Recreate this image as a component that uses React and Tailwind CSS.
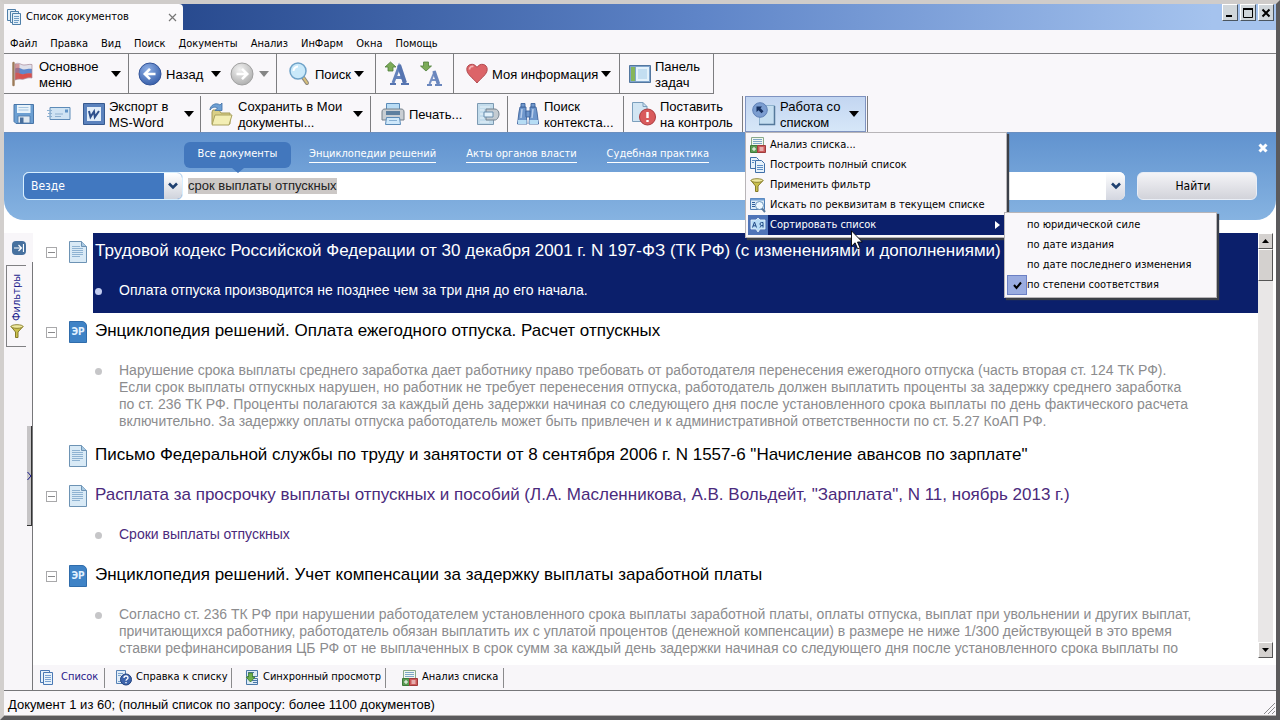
import { useState } from "react";

const ui = "font-['DejaVu_Sans_Condensed','DejaVu_Sans',sans-serif]";

const menuItems = ["Файл", "Правка", "Вид", "Поиск", "Документы", "Анализ", "ИнФарм", "Окна", "Помощь"];

const searchTabs = ["Энциклопедии решений", "Акты органов власти", "Судебная практика"];

const documents = [
  {
    title: "Трудовой кодекс Российской Федерации от 30 декабря 2001 г. N 197-ФЗ (ТК РФ) (с изменениями и дополнениями)",
    icon: "doc",
    active: true,
    lines: ["Оплата отпуска производится не позднее чем за три дня до его начала."],
  },
  {
    title: "Энциклопедия решений. Оплата ежегодного отпуска. Расчет отпускных",
    icon: "er",
    lines: [
      "Нарушение срока выплаты среднего заработка дает работнику право требовать от работодателя перенесения ежегодного отпуска (часть вторая ст. 124 ТК РФ).",
      "Если срок выплаты отпускных нарушен, но работник не требует перенесения отпуска, работодатель должен выплатить проценты за задержку среднего заработка",
      "по ст. 236 ТК РФ. Проценты полагаются за каждый день задержки начиная со следующего дня после установленного срока выплаты по день фактического расчета",
      "включительно. За задержку оплаты отпуска работодатель может быть привлечен и к административной ответственности по ст. 5.27 КоАП РФ.",
    ],
  },
  {
    title: "Письмо Федеральной службы по труду и занятости от 8 сентября 2006 г. N 1557-6 \"Начисление авансов по зарплате\"",
    icon: "doc",
    lines: [],
  },
  {
    title: "Расплата за просрочку выплаты отпускных и пособий (Л.А. Масленникова, А.В. Вольдейт, \"Зарплата\", N 11, ноябрь 2013 г.)",
    icon: "doc",
    visited: true,
    lines: ["Сроки выплаты отпускных"],
  },
  {
    title: "Энциклопедия решений. Учет компенсации за задержку выплаты заработной платы",
    icon: "er",
    lines: [
      "Согласно ст. 236 ТК РФ при нарушении работодателем установленного срока выплаты заработной платы, оплаты отпуска, выплат при увольнении и других выплат,",
      "причитающихся работнику, работодатель обязан выплатить их с уплатой процентов (денежной компенсации) в размере не ниже 1/300 действующей в это время",
      "ставки рефинансирования ЦБ РФ от не выплаченных в срок сумм за каждый день задержки начиная со следующего дня после установленного срока выплаты по",
    ],
  },
];

const sortOptions = ["по юридической силе", "по дате издания", "по дате последнего изменения", "по степени соответствия"];

/* ---------- icons ---------- */

function Arrow({ className = "text-black" }) {
  return (
    <svg width="10" height="6" viewBox="0 0 10 6" className={`shrink-0 ${className}`}>
      <path d="M0 0h10L5 6z" fill="currentColor" />
    </svg>
  );
}

function Chevron() {
  return (
    <svg width="10" height="8" viewBox="0 0 10 8" className="shrink-0">
      <path d="M1 1.5l4 4 4-4" fill="none" stroke="#1f4170" strokeWidth="2.6" />
    </svg>
  );
}

function PagesIcon() {
  return (
    <svg width="15" height="16" viewBox="0 0 15 16" className="shrink-0">
      <g fill="#e4f0f8" stroke="#4f7fa8">
        <path d="M.5.5h8v11h-8z" />
        <path d="M3.5 2.5h8v11h-8z" />
        <path d="M5.5 4.5h8v11h-8z" />
      </g>
      <path d="M7 7.5h5M7 9.5h5M7 11.5h5M7 13.5h4" stroke="#6f9cc4" />
    </svg>
  );
}

function ListIcon() {
  return (
    <svg width="14" height="16" viewBox="0 0 14 16" className="shrink-0">
      <g fill="#e8f2fb" stroke="#4a78b4">
        <path d="M.5.5h9v12h-9z" />
        <path d="M3.5 2.5h9v12h-9z" />
      </g>
      <path d="M5 5.5h6M5 7.5h6M5 9.5h6M5 11.5h6" stroke="#7aa2d2" />
    </svg>
  );
}

function FlagIcon() {
  return (
    <svg width="24" height="26" viewBox="0 0 24 26" className="shrink-0">
      <path d="M2.5 2v22" stroke="#9c7a58" strokeWidth="2.4" strokeLinecap="round" />
      <path d="M4 3c4-2 6 1 9 1s5-1 8-.5V17c-3-.5-5 0-8 1-3 1-5-2.5-9-1z" fill="#dfe0ea" />
      <path d="M4 7.5c4-2 6 1 9 1s5-1 8-.5v5c-3-.5-5-.5-8 .5-3 1-5-2-9-1z" fill="#5f88cc" />
      <path d="M4 12c4-1 6 2 9 1s5-1 8-.5V17c-3-.5-5 0-8 1-3 1-5-1-9 1z" fill="#d8504e" />
      <path d="M4 3h4.500v15L4 19z" fill="#c9605f" opacity=".6" />
      <path d="M4 3c4-2 6 1 9 1s5-1 8-.5V17c-3-.5-5 0-8 1-3 1-5-1-9 1z" fill="none" stroke="#a9899a" strokeWidth=".7" />
    </svg>
  );
}

function RoundArrow({ back }) {
  return (
    <svg width="24" height="24" viewBox="0 0 24 24" className="shrink-0">
      <defs>
        <radialGradient id={back ? "gBack" : "gFwd"} cx=".4" cy=".3" r=".8">
          <stop offset="0" stopColor={back ? "#8fb0e6" : "#f2f2f2"} />
          <stop offset="1" stopColor={back ? "#2f57a4" : "#a8a8a8"} />
        </radialGradient>
      </defs>
      <circle cx="12" cy="12" r="11" fill={back ? "url(#gBack)" : "url(#gFwd)"} stroke={back ? "#34559a" : "#a0a0a0"} />
      <path
        d={back ? "M17.5 12H7.5M12 6.8L6.8 12l5.2 5.2" : "M6.5 12h10M12 6.8l5.2 5.2-5.2 5.2"}
        fill="none"
        stroke="#fff"
        strokeWidth="2.6"
      />
    </svg>
  );
}

function MagnifierIcon() {
  return (
    <svg width="22" height="24" viewBox="0 0 22 24" className="shrink-0">
      <path d="M13 14l5 7" stroke="#8f8a80" strokeWidth="4" strokeLinecap="round" />
      <path d="M14 15l4 6" stroke="#d9c07a" strokeWidth="2" strokeLinecap="round" />
      <circle cx="9" cy="9" r="8" fill="#c9e9fa" stroke="#6ea2c8" strokeWidth="1.5" />
      <path d="M4.5 9A4.5 4.5 0 019 4.5" stroke="#fff" strokeWidth="2" fill="none" />
    </svg>
  );
}

function FontIcon({ up }) {
  return (
    <svg width="24" height="26" viewBox="0 0 24 26" className="shrink-0">
      {up ? (
        <>
          <path d="M8 22l6-16 5.500 16M10.500 16.500h8" fill="none" stroke="#6482bc" strokeWidth="3" />
          <path d="M14 4l6 18" stroke="#5674b0" strokeWidth="4" />
          <path d="M5 23h6M16 23h8" stroke="#5674b0" strokeWidth="2" />
          <path d="M5.5 1L0 6h3v4h5V6h3z" fill="#7cab58" stroke="#4f7d3a" strokeWidth=".8" />
        </>
      ) : (
        <>
          <path d="M9.5 23L14 12l4 11M11 19h7" fill="none" stroke="#7791c4" strokeWidth="2" />
          <path d="M14 10l4.5 13" stroke="#6a86bd" strokeWidth="3.5" />
          <path d="M7 24h5M15 24h7" stroke="#6a86bd" strokeWidth="2" />
          <path d="M3.5 1h5v4h3L6 10 .5 5h3z" fill="#7cab58" stroke="#4f7d3a" strokeWidth=".8" />
        </>
      )}
    </svg>
  );
}

function HeartIcon() {
  return (
    <svg width="22" height="21" viewBox="0 0 22 21" className="shrink-0">
      <path d="M11 20C7 15 .8 11.5.8 6.3.8 1 8-.8 11 4.5 14-.8 21.2 1 21.2 6.300 21.200 11.500 15 15 11 20z" fill="#dc6468" stroke="#b14a50" />
      <path d="M3.5 6.5c0-2.5 2-3.5 4-3" stroke="#f3b4b4" strokeWidth="1.8" fill="none" />
    </svg>
  );
}

function PanelIcon() {
  return (
    <svg width="22" height="18" viewBox="0 0 22 18" className="shrink-0">
      <path d="M.5.5h21v17H.5z" fill="#7fa4cc" stroke="#54779f" />
      <path d="M2 2h4v14H2z" fill="#86b65a" />
      <path d="M7 2h13v14H7z" fill="#e4f2fb" />
      <path d="M9 4h9v10H9z" fill="#c3def1" />
    </svg>
  );
}

function FloppyIcon() {
  return (
    <svg width="22" height="22" viewBox="0 0 22 22" className="shrink-0">
      <path d="M1 1.5h19.500v19H3l-2-2z" fill="#6c9fd2" stroke="#4a76a8" />
      <path d="M4 2h13.5v8H4z" fill="#e9f3fa" />
      <path d="M5.5 4.5h10M5.5 7h10" stroke="#a8c6e2" />
      <path d="M5 13h12v7H5z" fill="#dfe8f0" stroke="#4a76a8" strokeWidth=".8" />
      <path d="M7 14.5h3.5V20H7z" fill="#496f9c" />
    </svg>
  );
}

function EnvelopeIcon() {
  return (
    <svg width="24" height="16" viewBox="0 0 24 16" className="shrink-0">
      <path d="M3 1.5h20v12H3z" fill="#cfe3f3" stroke="#5d8bb8" />
      <path d="M18 3.5h3v3h-3z" fill="#5f93c6" />
      <path d="M8 8h8M8 10.5h6" stroke="#8fb0cf" />
      <path d="M0 4.5h5M1 7.5h4M0 10.5h5" stroke="#8db0d0" />
    </svg>
  );
}

function WordIcon() {
  return (
    <svg width="22" height="22" viewBox="0 0 22 22" className="shrink-0">
      <path d="M.5.5h21v21H.5z" fill="#5b82bd" stroke="#36598f" />
      <path d="M4 4h14v14H4z" fill="#e2edf9" />
      <path d="M6 8l1.500 6L11 8.500l.8 5.500L16 8" fill="none" stroke="#2d4f8c" strokeWidth="2" />
    </svg>
  );
}

function FolderIcon() {
  return (
    <svg width="25" height="24" viewBox="0 0 25 24" className="shrink-0">
      <path d="M3 10l1-2h6l2 3h9v11H3z" fill="#d9cf86" stroke="#a39a58" />
      <path d="M6 13h17l-3 10H3z" fill="#f3eeb4" stroke="#aaa25e" />
      <path d="M1 8c0-5 6-8 10-5l2-2v7.5H6L8.5 6C6 4.5 3 5 1 8z" fill="#6ea0d4" stroke="#3f6ea6" strokeWidth=".8" />
    </svg>
  );
}

function PrinterIcon() {
  return (
    <svg width="24" height="24" viewBox="0 0 24 24" className="shrink-0">
      <path d="M5.5 1.5h13v7h-13z" fill="#b9dcf5" stroke="#5b8bb8" />
      <path d="M1 10c0-2 1-3 3-3h16c2 0 3 1 3 3v8H1z" fill="#c9ced3" stroke="#74808a" />
      <path d="M5 9h14v4H5z" fill="#5d7f9f" />
      <path d="M5.5 15.5h13l1 7h-15z" fill="#cfe8fa" stroke="#5b8bb8" />
      <path d="M8 18.5h8" stroke="#88b0d2" />
    </svg>
  );
}

function PrintDocIcon() {
  return (
    <svg width="24" height="24" viewBox="0 0 24 24" className="shrink-0">
      <path d="M1.5 1.5h16v21h-16z" fill="#c3dcec" stroke="#7d9ab2" />
      <path d="M4 5h10M4 8h4M4 12h3M4 16h4M4 20h9" stroke="#e8f3fa" />
      <path d="M10 7h9c2 0 4 2 4 5s-2 6-4 6h-9z" fill="#c4cbd1" stroke="#74828e" />
      <path d="M8 10h9v5H8z" fill="#e3f1fa" stroke="#6a8fae" />
    </svg>
  );
}

function BinocularsIcon() {
  return (
    <svg width="24" height="24" viewBox="0 0 24 24" className="shrink-0">
      <g fill="#6f97cc" stroke="#3c629c" strokeWidth=".9">
        <path d="M4 5h6v5l1 12H1.500L3 10z" />
        <path d="M14 5h6l1 5 1.500 12H13l1-12z" />
        <path d="M10 9h4v6h-4z" />
        <path d="M5 1.5h4V5H5zM15 1.5h4V5h-4z" />
      </g>
      <path d="M2 18h8.5v4H2zM13.5 18H22v4h-8.500z" fill="#b6dcf4" />
      <path d="M6 7L5 16M17 7l-1 9" stroke="#b7cdec" strokeWidth="1.5" />
    </svg>
  );
}

function ControlIcon() {
  return (
    <svg width="25" height="24" viewBox="0 0 25 24" className="shrink-0">
      <path d="M1.5.5H12l4 4v15H1.500z" fill="#d2e5f3" stroke="#7c9fbd" />
      <path d="M12 .5v4h4" fill="none" stroke="#7c9fbd" />
      <circle cx="16.5" cy="15" r="8" fill="#d95a5c" stroke="#ab3c40" />
      <path d="M16.5 10v6M16.5 18v2" stroke="#fff" strokeWidth="2.4" />
    </svg>
  );
}

function ListWorkIcon() {
  return (
    <svg width="24" height="24" viewBox="0 0 24 24" className="shrink-0">
      <path d="M7.5 3.5h15v19h-15z" fill="#c5def0" stroke="#8fb3cf" />
      <path d="M7 22.5h15.5V4" stroke="#55799b" strokeWidth="1.5" fill="none" />
      <circle cx="8" cy="8" r="7.3" fill="#7b9dd0" stroke="#5f80b6" />
      <path d="M4.5 4.5H10L8.5 6.2l3 3-2 2-3-3L4.500 10z" fill="#16305f" />
    </svg>
  );
}

function AnalysisIcon() {
  return (
    <svg width="16" height="16" viewBox="0 0 16 16" className="shrink-0">
      <path d="M1.5.5h12v9h-12z" fill="#f0f8ee" stroke="#8aa98a" />
      <path d="M3 2.5h9M3 4.5h9M3 6.5h9" stroke="#7fa6c8" />
      <path d="M.5 8.5h7v7h-7z" fill="#5c9c54" stroke="#3d7a3a" />
      <path d="M7.5 8.5h8v7h-8z" fill="#cc5a5a" stroke="#a03c3c" />
      <path d="M2 12h4M4 10v4M9.5 11h4M9.5 13h4" stroke="#fff" />
    </svg>
  );
}

function CopyIcon() {
  return (
    <svg width="16" height="16" viewBox="0 0 16 16" className="shrink-0">
      <g fill="#e6f1fa" stroke="#3f6fa8">
        <path d="M.5.5h6l2 2v9h-8z" />
        <path d="M5.5 3.5h6l3 3v9h-9z" />
      </g>
      <path d="M2 3.5h3M2 5.5h2M7 8.5h6M7 10.5h6M7 12.5h6" stroke="#5b8cc4" />
    </svg>
  );
}

function FunnelIcon() {
  return (
    <svg width="14" height="14" viewBox="0 0 14 14" className="shrink-0">
      <path d="M1 2.5L5.5 8v5.500H8V8l5-5.500z" fill="#c9bf4c" stroke="#857b28" />
      <ellipse cx="7" cy="2.5" rx="6" ry="1.8" fill="#efe9a0" stroke="#857b28" strokeWidth=".9" />
    </svg>
  );
}

function SearchListIcon() {
  return (
    <svg width="16" height="16" viewBox="0 0 16 16" className="shrink-0">
      <path d="M.5 1.5h14v11H.5z" fill="#dcebf7" stroke="#4d7db4" />
      <path d="M.5 1.5h14v2H.5z" fill="#6d9bd0" />
      <path d="M2 5.5h3M2 7.5h3M2 9.5h3" stroke="#2f5f9c" />
      <circle cx="9.5" cy="8.5" r="4" fill="#eef8ff" stroke="#6a94bd" />
      <path d="M12 11.5l3 3.5" stroke="#57779c" strokeWidth="2" />
    </svg>
  );
}

function SortIcon() {
  return (
    <svg width="16" height="16" viewBox="0 0 16 16" className="shrink-0">
      <path d="M1 3h5l2-2 2 2h5v9h-5l-2 3-2-3H1z" fill="#b9dcf6" stroke="#e8f4fd" strokeWidth=".8" />
      <path d="M2.5 10.5L4.5 5l2 5.500M3 8.800h3M13 10.500v-5h-1.500a1.500 1.500 0 000 3H13M11.500 8.500l-1.500 2" fill="none" stroke="#234a86" />
    </svg>
  );
}

function HelpIcon() {
  return (
    <svg width="16" height="16" viewBox="0 0 16 16" className="shrink-0">
      <path d="M.5.5h9v13h-9z" fill="#e1edf8" stroke="#5681b4" />
      <path d="M2 3.5h5M2 5.5h3M2 11.5h3" stroke="#7ba3cf" />
      <circle cx="10" cy="9.5" r="5.5" fill="#3d64ac" stroke="#22427e" />
      <path d="M8 8a2 2 0 114 0c0 1.300-2 1.200-2 2.700M10 12v1.200" fill="none" stroke="#fff" strokeWidth="1.3" />
    </svg>
  );
}

function SyncIcon() {
  return (
    <svg width="14" height="16" viewBox="0 0 14 16" className="shrink-0">
      <path d="M1.5.5h11v6h-11zM1.5 8.5h11v6h-11z" fill="#dceaf6" stroke="#4a78a8" />
      <path d="M7 10.5h5M3 2.5h6M8 12.5h4" stroke="#4a78a8" />
      <path d="M3.5 3h4v4H10l-4.500 5L1 7h2.500z" fill="#6fb04c" stroke="#3b7a2e" strokeWidth=".8" />
    </svg>
  );
}

function DocIcon() {
  return (
    <svg width="18" height="22" viewBox="0 0 18 22" className="shrink-0">
      <path d="M.5.5h12l5 5v16H.5z" fill="#d9eaf6" stroke="#6d93b4" />
      <path d="M12.5.5v5h5" fill="#a9c9e2" stroke="#6d93b4" />
      <path d="M3 5.5h8M3 7.5h11M3 9.5h11M3 11.5h11M3 13.5h11M3 15.5h8" stroke="#8fb3d2" />
    </svg>
  );
}

function ErIcon() {
  return (
    <span className={`flex h-[22px] w-[18px] shrink-0 items-center justify-center rounded-tr-[5px] border border-[#2f6cab] bg-[#3f83c6] text-[10px] leading-none font-bold text-[#e2f1ff] ${ui}`}>
      ЭР
    </span>
  );
}

function CursorIcon() {
  return (
    <svg width="12" height="20" viewBox="0 0 12 20">
      <path d="M.5.8v15.400l3.600-3.400 2.500 6 2.400-1-2.500-5.800h4.800z" fill="#fff" stroke="#000" strokeWidth=".9" />
    </svg>
  );
}

/* ---------- window parts ---------- */

function TitleBar() {
  const box = "flex h-[17px] w-4 items-center justify-center border border-t-white border-l-white border-r-[#4a5560] border-b-[#4a5560] bg-[#d0d6da]";
  return (
    <header className="flex h-[26px] shrink-0 items-stretch bg-linear-to-r from-[#17377c] via-[#5f85c8] via-55% to-[#a5c3ee] to-95%">
      <div className="flex w-[179px] items-center rounded-tr-sm bg-[#fbfafc] pr-1.5 pl-[3px]">
        <PagesIcon />
        <span className="flex-1 pl-1 text-[11px] whitespace-nowrap">Список документов</span>
        <button aria-label="Закрыть вкладку" className="flex">
          <svg width="9" height="9" viewBox="0 0 9 9">
            <path d="M1 1l7 7M8 1L1 8" stroke="#777" strokeWidth="1.2" />
          </svg>
        </button>
      </div>
      <div className="ml-auto flex items-start gap-0.5 pr-0.5">
        <button aria-label="Свернуть" className={box}>
          <svg width="10" height="10"><path d="M1 8h6" stroke="#000" strokeWidth="2" /></svg>
        </button>
        <button aria-label="Развернуть" className={box}>
          <svg width="10" height="10"><path d="M.5 1.5h9v8h-9z" fill="none" stroke="#000" /><path d="M0 1h10" stroke="#000" strokeWidth="2" /></svg>
        </button>
        <button aria-label="Закрыть" className={box}>
          <svg width="10" height="10"><path d="M1.5 1.5l7 7M8.5 1.5l-7 7" stroke="#000" strokeWidth="2" /></svg>
        </button>
      </div>
    </header>
  );
}

function Tool({ icon, lines, arrow, className = "" }) {
  return (
    <button className={`flex h-full items-center text-left ${className}`}>
      {icon}
      <span className="pt-0.5 pl-1 whitespace-nowrap">
        {lines.map((line) => (
          <span key={line} className="block">{line}</span>
        ))}
      </span>
      {arrow}
    </button>
  );
}

function Toolbar() {
  const group = "flex h-full items-center border-r border-[#7d7d80]";
  return (
    <div className="shrink-0 text-[13px] leading-4">
      <div className="flex border-t border-[#7d7d80]">
        <div className="flex h-10 items-center border-b border-[#7d7d80]">
          <div className={`${group} w-[125px] pr-[7px] pl-[7px]`}>
            <Tool icon={<FlagIcon />} lines={["Основное", "меню"]} arrow={<Arrow className="ml-auto text-black" />} className="w-full" />
          </div>
          <div className={`${group} w-[148px] pr-[7px] pl-[9px]`}>
            <Tool icon={<RoundArrow back />} lines={["Назад"]} />
            <button aria-label="История назад" className="ml-auto"><Arrow /></button>
            <button aria-label="Вперед" className="ml-[9px]"><RoundArrow /></button>
            <button aria-label="История вперед" className="ml-[5px]"><Arrow className="text-[#858585]" /></button>
          </div>
          <div className={`${group} w-[99px] pr-[11px] pl-3`}>
            <Tool icon={<MagnifierIcon />} lines={["Поиск"]} arrow={<Arrow className="ml-auto text-black" />} className="w-full" />
          </div>
          <div className={`${group} w-[78px] justify-between px-[9px]`}>
            <button aria-label="Увеличить шрифт"><FontIcon up /></button>
            <button aria-label="Уменьшить шрифт"><FontIcon /></button>
          </div>
          <div className={`${group} w-[166px] pr-2 pl-3`}>
            <Tool icon={<HeartIcon />} lines={["Моя информация"]} arrow={<Arrow className="ml-auto text-black" />} className="w-full" />
          </div>
          <div className={`${group} w-[94px] pl-[9px]`}>
            <Tool icon={<PanelIcon />} lines={["Панель", "задач"]} />
          </div>
        </div>
      </div>

      <div className="flex h-[38px] items-center pt-0.5">
        <div className={`${group} w-[197px] pr-1.5 pl-[9px]`}>
          <button aria-label="Сохранить"><FloppyIcon /></button>
          <button aria-label="Отправить" className="ml-3"><EnvelopeIcon /></button>
          <Tool icon={<WordIcon />} lines={["Экспорт в", "MS-Word"]} arrow={<Arrow className="ml-auto text-black" />} className="ml-3 flex-1" />
        </div>
        <div className={`${group} w-[170px] pr-[7px] pl-2`}>
          <Tool icon={<FolderIcon />} lines={["Сохранить в Мои", "документы..."]} arrow={<Arrow className="ml-auto text-black" />} className="w-full" />
        </div>
        <div className={`${group} w-[137px] justify-between pr-[7px] pl-2.5`}>
          <Tool icon={<PrinterIcon />} lines={["Печать..."]} />
          <button aria-label="Печать документа"><PrintDocIcon /></button>
        </div>
        <div className={`${group} w-[116px] pl-2`}>
          <Tool icon={<BinocularsIcon />} lines={["Поиск", "контекста..."]} />
        </div>
        <div className={`${group} w-[119px] pl-[7px]`}>
          <Tool icon={<ControlIcon />} lines={["Поставить", "на контроль"]} />
        </div>
        <div className={`${group} relative w-[125px] pl-0.5`}>
          <Tool
            icon={<ListWorkIcon />}
            lines={["Работа со", "списком"]}
            arrow={<Arrow className="ml-auto text-black" />}
            className="w-[121px] border border-[#7f93c0] bg-linear-to-b from-[#c3d6f1] to-[#d6e7f8] pr-1.5 pl-1.5"
          />
          <ListMenu />
        </div>
      </div>
    </div>
  );
}

function ListMenu() {
  const [sort, setSort] = useState("по степени соответствия");
  const frame = "border border-[#b8b5b8] bg-[#f9f7fa] p-0.5 shadow-[2px_2px_1px_#3c4048]";
  const entries = [
    [<AnalysisIcon />, "Анализ списка..."],
    [<CopyIcon />, "Построить полный список"],
    [<FunnelIcon />, "Применить фильтр"],
    [<SearchListIcon />, "Искать по реквизитам в текущем списке"],
  ];
  return (
    <div role="menu" className={`absolute top-full left-0.5 z-20 w-[262px] text-[11px] leading-5 ${frame} ${ui}`}>
      {entries.map(([icon, text]) => (
        <button key={text} role="menuitem" className="flex h-5 w-full items-center whitespace-nowrap">
          <span className="flex w-[22px] pl-0.5">{icon}</span>
          {text}
        </button>
      ))}
      <div className="relative">
        <button role="menuitem" aria-expanded="true" className="flex h-5 w-full items-center bg-[#0b1f6b] pr-1 text-white">
          <span className="mr-0.5 flex h-5 w-5 items-center justify-center bg-[#4f74b8]"><SortIcon /></span>
          <span className="flex-1 text-left">Сортировать список</span>
          <svg width="5" height="8"><path d="M0 0l5 4-5 4z" fill="#fff" /></svg>
        </button>
        <div role="menu" className={`absolute -top-[3px] left-full w-[213px] ${frame}`}>
          {sortOptions.map((option) => (
            <button
              key={option}
              role="menuitemradio"
              aria-checked={sort === option}
              onClick={() => setSort(option)}
              className="flex h-5 w-full items-center whitespace-nowrap"
            >
              <span className={`flex h-5 w-5 items-center justify-center ${sort === option ? "border border-[#6c80c4] bg-[#9aace0]" : ""}`}>
                {sort === option && (
                  <svg width="9" height="9"><path d="M1 4l2.5 3L8 1.500" fill="none" stroke="#000" strokeWidth="2" /></svg>
                )}
              </span>
              {option}
            </button>
          ))}
        </div>
        <div className="pointer-events-none absolute top-[15px] left-[103px]">
          <CursorIcon />
        </div>
      </div>
    </div>
  );
}

function SearchPanel() {
  return (
    <section className="shrink-0 rounded-b-[20px] border-t border-[#6a8fc0] bg-linear-to-b from-[#6193cf] to-[#86b3e1] pb-5">
      <nav className="flex h-[39px] items-center text-[11px] text-white">
        <div className="relative ml-[180px] pt-1">
          <button className="h-[26px] w-[107px] rounded-md bg-[#4277bd]">Все документы</button>
          <svg width="12" height="5" className="absolute top-full left-12"><path d="M0 0h12L6 5z" fill="#4277bd" /></svg>
        </div>
        <div className="flex gap-[30px] pt-1 pl-[18px]">
          {searchTabs.map((tab) => (
            <a key={tab} href="#" className="border-b border-white leading-4 whitespace-nowrap">{tab}</a>
          ))}
        </div>
        <button aria-label="Закрыть поиск" className="mr-2 ml-auto pb-2.5">
          <svg width="10" height="10"><path d="M1.5 1.5l7 7M8.5 1.5l-7 7" stroke="#fff" strokeWidth="3" /></svg>
        </button>
      </nav>
      <div className="flex h-7 items-stretch pr-[19px] pl-[19px]">
        <div className="flex min-w-0 flex-1 rounded-md bg-white">
          <label className="relative flex w-40 shrink-0 overflow-hidden rounded-md border border-[#d7efff] bg-[#4178c0]">
            <select aria-label="Область поиска" className="w-full appearance-none pl-[7px] text-[12px] text-white">
              <option>Везде</option>
            </select>
            <span className="pointer-events-none absolute inset-y-0 right-0 flex w-[18px] items-center justify-center bg-linear-to-b from-white to-[#cfd3dc]">
              <Chevron />
            </span>
          </label>
          <div className="flex flex-1 items-center pl-[5px]">
            <input
              aria-label="Запрос"
              defaultValue="срок выплаты отпускных"
              className="field-sizing-content h-4 bg-[#ccc8c6] font-['Liberation_Sans',Arial,sans-serif] text-[13px] leading-4 text-[#222] outline-none"
            />
          </div>
          <button aria-label="История запросов" className="flex w-[19px] items-center justify-center rounded-r-md bg-linear-to-b from-white to-[#d3d6e0]">
            <Chevron />
          </button>
        </div>
        <button className="ml-3 w-[120px] rounded-md border border-[#e9eef6] bg-linear-to-b from-[#f4f4f7] to-[#d2d3da] pr-2 text-[12px]">Найти</button>
      </div>
    </section>
  );
}

function Sidebar() {
  return (
    <aside className="flex w-[29px] shrink-0 flex-col bg-[#f8f6f9]">
      <div className="flex h-[29px] items-center pl-2">
        <button aria-label="Закрепить панель" className="flex h-3.5 w-3.5 items-center justify-center rounded-sm bg-[#47719f]">
          <svg width="10" height="8"><path d="M0 4h7M4.5 1l3 3-3 3M9.5 0v8" fill="none" stroke="#fff" strokeWidth="1.2" /></svg>
        </button>
      </div>
      <div className="relative flex flex-1 flex-col border-r border-[#77777a] pt-[3px] pl-0.5">
        <button className="flex h-[82px] w-5 flex-col items-center justify-end gap-[3px] border-y border-l border-[#808083] pb-2 text-[11px] text-[#1a1a8c]">
          <span className="rotate-180 leading-4 [writing-mode:vertical-rl]">Фильтры</span>
          <FunnelIcon />
        </button>
        <button aria-label="Свернуть боковую панель" className="absolute inset-y-0 right-0 my-auto flex h-[100px] w-[5px] items-center justify-center border-r border-b border-[#333] bg-[#c6c4c6]">
          <svg width="5" height="8"><path d="M.5 0L4 4 .5 8" fill="none" stroke="#1a1a8c" /></svg>
        </button>
      </div>
    </aside>
  );
}

function DocumentItem({ doc }) {
  let titleColor = "text-black";
  let textColor = "text-[#8c8c8e]";
  if (doc.active) {
    titleColor = "text-white";
    textColor = "text-white";
  } else if (doc.visited) {
    titleColor = "text-[#4b2a7c]";
    textColor = "text-[#4b2a7c]";
  }
  return (
    <li className="flex pl-[13px]">
      <div className="w-[11px] shrink-0 pt-3.5">
        {doc.lines.length > 0 && (
          <button aria-label="Свернуть" className="flex h-[11px] w-[11px] items-center justify-center border border-[#a9a9ab] bg-white">
            <span className="h-px w-[7px] bg-[#8a8a8c]" />
          </button>
        )}
      </div>
      <div className="w-9 shrink-0 pt-2 pl-3">{doc.icon === "er" ? <ErIcon /> : <DocIcon />}</div>
      <article className={`min-w-0 flex-1 overflow-hidden whitespace-nowrap ${doc.active ? "bg-[#0b1f6b]" : ""}`}>
        <h2 className={`h-10 pt-2 pl-0.5 text-[17px] leading-5 ${titleColor}`}>{doc.title}</h2>
        {doc.lines.length > 0 && (
          <div className={`flex min-h-10 pt-[9px] pb-[7px] pl-0.5 text-[14px] leading-[17px] ${textColor}`}>
            <span className={`mt-1.5 mr-[17px] h-[7px] w-[7px] shrink-0 rounded-full ${doc.active ? "bg-[#c3cdf0]" : "bg-[#c6c6c8]"}`} />
            <p>
              {doc.lines.map((line) => (
                <span key={line} className="block">{line}</span>
              ))}
            </p>
          </div>
        )}
      </article>
    </li>
  );
}

function Scrollbar() {
  const box = "w-[15px] border border-t-white border-l-white border-r-[#555] border-b-[#555] bg-[#d4d1cf]";
  return (
    <div className="mr-[3px] mb-[7px] flex w-[15px] shrink-0 flex-col bg-[#e9e7e7]">
      <button aria-label="Вверх" className={`flex h-4 items-center justify-center ${box}`}>
        <svg width="7" height="4"><path d="M0 4h7L3.5 0z" /></svg>
      </button>
      <div className={`h-8 ${box}`} />
      <button aria-label="Вниз" className={`mt-auto flex h-4 items-center justify-center ${box}`}>
        <svg width="7" height="4"><path d="M0 0h7L3.5 4z" /></svg>
      </button>
    </div>
  );
}

function BottomTabs() {
  const tab = "flex h-5 items-center border-r border-[#8a8a8c] whitespace-nowrap";
  return (
    <nav className="flex h-[25px] shrink-0 items-center bg-[#f8f6f9] text-[11px]">
      <button className={`${tab} w-[72px] gap-[7px] pl-[7px] text-[#2a1a8a]`}><ListIcon />Список</button>
      <button className={`${tab} w-[127px] gap-1 pl-[11px]`}><HelpIcon />Справка к списку</button>
      <button className={`${tab} w-[154px] gap-1 pl-[13px]`}><SyncIcon />Синхронный просмотр</button>
      <button className={`${tab} w-[118px] gap-1 pl-4`}><AnalysisIcon />Анализ списка</button>
    </nav>
  );
}

export default function App() {
  return (
    <div className="h-screen overflow-hidden border-4 border-t-[#cfccca] border-r-[#5b5a5c] border-b-[#5b5a5c] border-l-[#d2cfcd] bg-[#f9f7fa] text-black">
      <div className={`flex h-full flex-col ${ui}`}>
        <TitleBar />
        <nav className="flex h-[23px] shrink-0 items-center gap-[13px] pt-1.5 pl-1.5 text-[11px]">
          {menuItems.map((item) => (
            <button key={item}>{item}</button>
          ))}
        </nav>
        <div className="font-['Liberation_Sans',Arial,sans-serif]">
          <Toolbar />
        </div>
        <div className="bg-white pb-[13px]">
          <SearchPanel />
        </div>
        <div className="flex min-h-0 flex-1">
          <Sidebar />
          <div className="flex min-w-0 flex-1 flex-col">
            <main className="flex min-h-0 flex-1 bg-white font-['Liberation_Sans',Arial,sans-serif]">
              <ul className="min-w-0 flex-1 overflow-hidden">
                {documents.map((doc) => (
                  <DocumentItem key={doc.title} doc={doc} />
                ))}
              </ul>
              <Scrollbar />
            </main>
            <BottomTabs />
          </div>
        </div>
        <footer className="flex h-[26px] shrink-0 items-end justify-between border-t border-[#77777a] border-b border-b-[#b5b2b0] font-['Liberation_Sans',Arial,sans-serif] text-[13px]">
          <span className="pb-px pl-1">Документ 1 из 60; (полный список по запросу: более 1100 документов)</span>
          <svg width="13" height="13"><path d="M1 12L12 1M5 12l7-7M9 12l3-3" stroke="#8b8b8d" /></svg>
        </footer>
      </div>
    </div>
  );
}
